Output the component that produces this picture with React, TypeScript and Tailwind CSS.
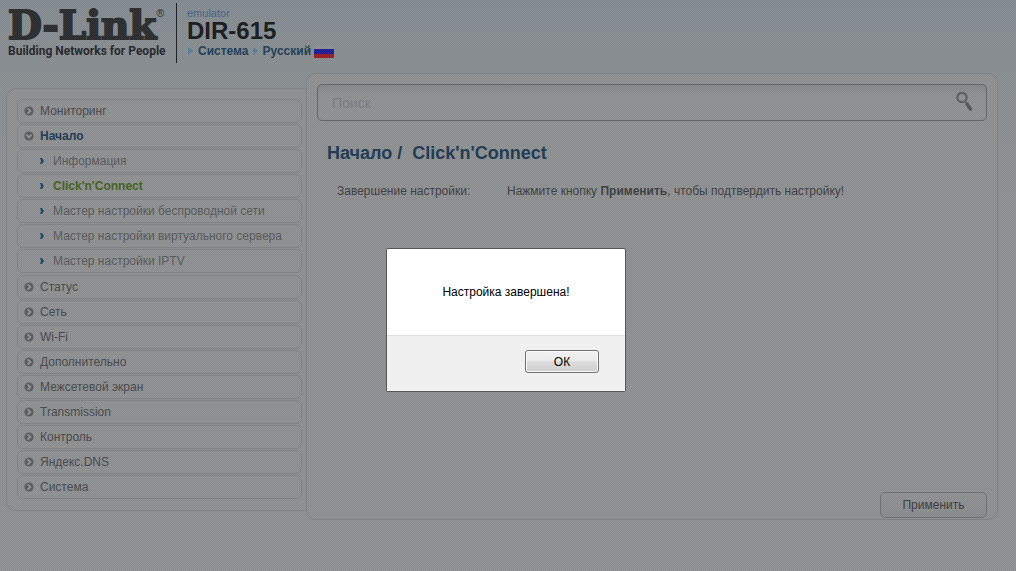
import { clsx } from "clsx";

interface MenuItem {
  title: string;
  open?: boolean;
  children?: { title: string; active?: boolean }[];
}

const menu: MenuItem[] = [
  { title: "Мониторинг" },
  {
    title: "Начало",
    open: true,
    children: [
      { title: "Информация" },
      { title: "Click'n'Connect", active: true },
      { title: "Мастер настройки беспроводной сети" },
      { title: "Мастер настройки виртуального сервера" },
      { title: "Мастер настройки IPTV" },
    ],
  },
  { title: "Статус" },
  { title: "Сеть" },
  { title: "Wi-Fi" },
  { title: "Дополнительно" },
  { title: "Межсетевой экран" },
  { title: "Transmission" },
  { title: "Контроль" },
  { title: "Яндекс.DNS" },
  { title: "Система" },
];

const itemClass = "flex h-6 items-center rounded-md border border-[#808284]";

function CircleArrow({ down }: { down?: boolean }) {
  return (
    <svg viewBox="0 0 10 10" className={clsx("h-[10px] w-[10px] shrink-0", down && "rotate-90")}>
      <circle cx="5" cy="5" r="4.6" fill="#5a5c5e" />
      <path d="M3.6 2.4 L6.4 5 L3.6 7.6" fill="none" stroke="#939597" strokeWidth="1.8" />
    </svg>
  );
}

function SmallArrow() {
  return (
    <svg viewBox="0 0 4 6" className="h-[6px] w-[4px] shrink-0">
      <path d="M0 0 H2 L4 3 L2 6 H0 L1 3 Z" fill="#1d4a68" />
    </svg>
  );
}

function Crumb({ children }: { children: string }) {
  return (
    <a href="#" className="flex items-center gap-1 text-xs font-bold text-[#1f3f57]">
      <svg viewBox="0 0 7 8" className="h-2 w-[7px]">
        <path d="M1 0 L6.5 4 L1 8 Z" fill="#56829a" />
      </svg>
      {children}
    </a>
  );
}

function Header() {
  return (
    <header className="flex h-[73px] items-start pt-[3px]">
      <div className="flex h-[60px] w-[177px] flex-col border-r border-[#1c1e20] pl-2 pt-1 text-[#26282b]">
        <div className="flex h-9 items-start whitespace-nowrap">
          <span className="font-['DejaVu_Serif'] text-[39px] leading-9 font-bold text-[#2b2d30] [-webkit-text-stroke:2px_#2b2d30]">
            D-Link
          </span>
          <span className="text-[11px] leading-3">®</span>
        </div>
        <div className="font-[Roboto] text-xs leading-4 font-bold whitespace-nowrap">
          Building Networks for People
        </div>
      </div>
      <div className="pt-1 pl-[10px]">
        <div className="text-[11px] leading-3 text-[#4b6285]">emulator</div>
        <div className="text-2xl leading-6 font-bold text-[#1b1c1e]">DIR-615</div>
        <div className="flex items-center gap-[3px] leading-4">
          <Crumb>Система</Crumb>
          <Crumb>Русский</Crumb>
          <svg viewBox="0 0 20 13" className="h-[13px] w-5">
            <rect width="20" height="13" fill="#8d9193" />
            <rect y="4" width="20" height="5" fill="#1f1f96" />
            <rect y="9" width="20" height="4" fill="#9a1f24" />
          </svg>
        </div>
      </div>
    </header>
  );
}

function Sidebar() {
  return (
    <nav className="mt-[15px] w-[300px] shrink-0 rounded-l-[10px] border border-r-0 border-[#808386] bg-[#8f9193] pt-[10px] pr-1 pb-[11px] pl-[10px]">
      <ul className="flex flex-col gap-px">
        {menu.map((item) => (
          <li key={item.title}>
            <a
              href="#"
              className={clsx(
                itemClass,
                "gap-[6px] pl-[6px]",
                item.open ? "font-bold text-[#1f3b55]" : "text-[#47494b]"
              )}
            >
              <CircleArrow down={item.open} />
              {item.title}
            </a>
            {item.children && (
              <ul className="flex flex-col gap-px pt-px pb-px">
                {item.children.map((child) => (
                  <li key={child.title}>
                    <a
                      href="#"
                      className={clsx(
                        itemClass,
                        "gap-[9px] pl-[22px]",
                        child.active ? "font-bold text-[#43611d]" : "text-[#58595b]"
                      )}
                    >
                      <SmallArrow />
                      {child.title}
                    </a>
                  </li>
                ))}
              </ul>
            )}
          </li>
        ))}
      </ul>
    </nav>
  );
}

function SearchBox() {
  return (
    <div className="relative">
      <input
        type="search"
        aria-label="Поиск"
        placeholder="Поиск"
        className="block h-[37px] w-full rounded-[5px] border border-[#636567] bg-linear-to-b from-[#868889] to-[#909294] to-40% pr-12 pl-[14px] text-sm placeholder:text-[#797b7d]"
      />
      <svg viewBox="0 0 18 20" className="absolute top-2 right-[13px] h-5 w-[18px]">
        <circle cx="6" cy="5.5" r="4.6" fill="none" stroke="#5c5e60" strokeWidth="2.2" />
        <path d="M9 9 L11 12" stroke="#626466" strokeWidth="1.5" />
        <path d="M11 12 L14.5 17" stroke="#58595b" strokeWidth="3.6" strokeLinecap="round" />
      </svg>
    </div>
  );
}

function Content() {
  return (
    <main className="mr-[18px] flex min-h-[447px] flex-1 flex-col rounded-[10px] border border-[#808386] bg-[#8f9193] px-[10px] pt-[10px] pb-px">
      <SearchBox />
      <h1 className="mt-5 pl-[10px] text-lg leading-6 font-bold whitespace-pre text-[#1d3b55]">
        {"Начало /  Click'n'Connect"}
      </h1>
      <dl className="mt-[18px] flex pl-5 leading-4 text-[#3d3f41]">
        <dt className="w-[170px]">Завершение настройки:</dt>
        <dd>
          Нажмите кнопку <b>Применить</b>, чтобы подтвердить настройку!
        </dd>
      </dl>
      <button className="mt-auto h-[26px] w-[107px] self-end rounded-[5px] border border-[#6f7173] bg-linear-to-b from-[#909294] to-[#898b8d] text-[#3b3d3f]">
        Применить
      </button>
    </main>
  );
}

function AlertDialog() {
  return (
    <div className="absolute inset-0 flex items-start justify-center bg-[repeating-conic-gradient(#00000008_0_25%,#ffffff08_0_50%)] bg-size-[2px_2px] pt-[248px] pr-1">
      <div
        role="alertdialog"
        aria-labelledby="alert-text"
        className="w-60 rounded-xs border border-[#555759] bg-white text-black"
      >
        <p id="alert-text" className="flex h-[86px] items-center justify-center">
          Настройка завершена!
        </p>
        <div className="flex h-14 items-start justify-end border-t border-[#dfdfdf] bg-[#f0f0f0] pt-[14px] pr-[26px]">
          <button className="h-[23px] w-[74px] rounded-[3px] border border-[#707070] bg-[linear-gradient(#f2f2f2,#ebebeb_50%,#dddddd_50%,#cfcfcf)] shadow-[inset_0_0_0_1px_#fafafa]">
            ОК
          </button>
        </div>
      </div>
    </div>
  );
}

export default function App() {
  return (
    <div className="relative min-h-screen bg-[#8f9193] bg-linear-to-b from-[#858c92] to-[#8f9193] to-[190px] font-['Liberation_Sans',Arial,sans-serif] text-xs">
      <Header />
      <div className="flex items-start pl-[6px]">
        <Sidebar />
        <Content />
      </div>
      <AlertDialog />
    </div>
  );
}
